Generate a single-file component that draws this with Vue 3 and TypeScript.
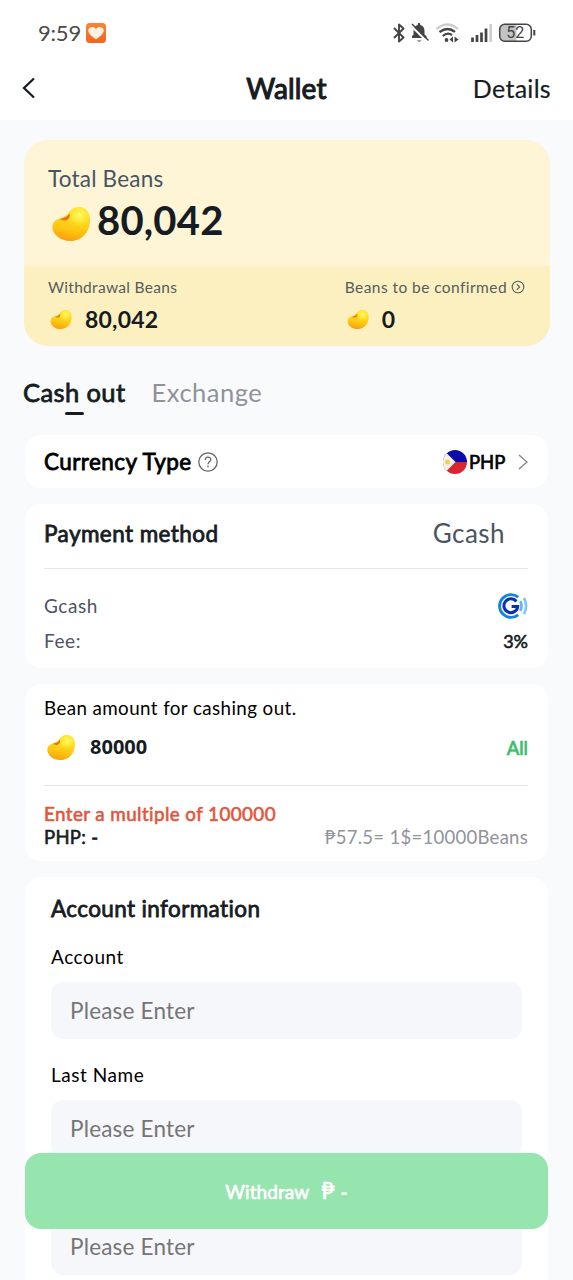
<script setup lang="ts">
import { defineComponent, h } from 'vue'

interface Field {
  id: string
  label: string
}

const fields: Field[] = [
  { id: 'account', label: 'Account' },
  { id: 'last-name', label: 'Last Name' },
  { id: 'extra', label: '' },
]

const BEAN =
  'M.6 18C1.600 14 4.500 12.200 8.500 11.200C12.500 10.200 14.500 8.300 16.500 5.800C19.300 2.300 22.500 0 27 0C34 0 38 6 38 13C38 25 30 34 18.500 34C7 34-1 26 .6 18Z'

const BeanIcon = defineComponent({
  setup() {
    return () =>
      h('svg', { viewBox: '0 0 38 34' }, [
        h('path', { d: BEAN, fill: 'url(#bean-body)' }),
        h('path', { d: BEAN, fill: 'url(#bean-shine)' }),
        h('path', {
          d: 'M7.500 12.300C11.500 11 15 10.200 17.500 6.500C18.500 9.500 17 13 13.500 13.500C11 13.900 10 12.800 7.500 12.300Z',
          fill: '#e5790f',
        }),
      ])
  },
})
</script>

<template>
  <div class="page">
    <svg class="defs" width="0" height="0">
      <defs>
        <linearGradient id="bean-body" x1="0.6" y1="0.1" x2="0.4" y2="1">
          <stop offset="0" stop-color="#ffdf3a" />
          <stop offset="0.6" stop-color="#fec910" />
          <stop offset="1" stop-color="#fb9e0c" />
        </linearGradient>
        <radialGradient id="bean-shine" cx="0.72" cy="0.25" r="0.36">
          <stop offset="0" stop-color="#fff678" />
          <stop offset="0.5" stop-color="#ffee30" stop-opacity="0.8" />
          <stop offset="1" stop-color="#ffd820" stop-opacity="0" />
        </radialGradient>
        <linearGradient id="app-bg" x1="0" y1="0" x2="0" y2="1">
          <stop offset="0" stop-color="#f5863a" />
          <stop offset="1" stop-color="#f3651c" />
        </linearGradient>
      </defs>
    </svg>

    <header class="top">
      <div class="status">
        <span class="clock">9:59</span>
        <svg class="app" viewBox="0 0 20 20">
          <rect width="20" height="20" rx="3.500" fill="url(#app-bg)" />
          <path d="M10 16.300C7 14.300 2.300 11 2.300 7.600C2.300 3.600 7.600 2.700 10 6C12.400 2.700 17.700 3.600 17.700 7.600C17.700 11 13 14.300 10 16.300Z" fill="#fff3e6" />
        </svg>
        <svg class="sys" viewBox="0 0 146 22">
          <path d="M3 6L12.500 15.500L8 19.500V2.500L12.500 6.500L3 16" fill="none" stroke="#444" stroke-width="1.900" stroke-linejoin="round" />
          <path d="M21 16V14L22.500 12.500V9C22.500 5.500 24 3.600 26.800 3V2C26.800 .8 29.200 .8 29.200 2V3C32 3.600 33.500 5.500 33.500 9V12.500L35.500 14V16Z" fill="#444" />
          <path d="M26 18.500H30.500Q28.200 20.800 26 18.500Z" fill="#444" />
          <path d="M19.800 3.500L36 19.500" stroke="#fff" stroke-width="2" />
          <path d="M21 2L37.500 18.500" stroke="#444" stroke-width="1.500" />
          <path d="M45.500 7Q56.500-2 67 7" fill="none" stroke="#ccc" stroke-width="2.300" />
          <path d="M48.500 10.200Q56.500 4 64 9.800M51.700 14Q56.500 9.800 61 13" fill="none" stroke="#444" stroke-width="2.300" />
          <circle cx="55.500" cy="18" r="1.900" fill="#444" />
          <path d="M62 14.500V20.500L58.500 17.500ZM63.500 14.500V20.500L67.500 17.500Z" fill="#444" />
          <path d="M81.500 20V15.500M86 20V13M90.500 20V10.500M95 20V6.500" stroke="#444" stroke-width="2.700" />
          <path d="M99.700 20V2" stroke="#ccc" stroke-width="2.500" />
          <path d="M114 2.500H125.500V19.500H114Q109 19.500 109 15V7Q109 2.500 114 2.500Z" fill="#c4c4c4" />
          <rect x="108.700" y="2.200" width="31.600" height="17" rx="5" fill="none" stroke="#444" stroke-width="1.500" />
          <path d="M143.300 8V13.500" stroke="#444" stroke-width="2" />
          <text x="124.300" y="16.200" text-anchor="middle" class="pct">52</text>
        </svg>
      </div>
      <nav class="bar">
        <svg class="back" viewBox="0 0 14 22"><path d="M12 1.500L2 11L12 20.500" /></svg>
        <h1>Wallet</h1>
        <a class="details">Details</a>
      </nav>
    </header>

    <section class="balance">
      <div class="total">
        <p class="total-label">Total Beans</p>
        <p class="total-value"><BeanIcon class="bean-lg" /><span>80,042</span></p>
      </div>
      <div class="split">
        <div class="part">
          <p class="part-label"><span class="wb">Withdrawal Beans</span></p>
          <p class="part-value"><BeanIcon class="bean-sm" /><span>80,042</span></p>
        </div>
        <div class="part">
          <p class="part-label">
            <span class="bc">Beans to be confirmed</span>
            <svg viewBox="0 0 14 14"><circle cx="7" cy="7" r="5.800" /><path d="M5.700 4.200L8.600 7L5.700 9.800" /></svg>
          </p>
          <p class="part-value"><BeanIcon class="bean-sm" /><span>0</span></p>
        </div>
      </div>
    </section>

    <div class="tabs">
      <span class="tab active">Cash out</span>
      <span class="tab">Exchange</span>
    </div>

    <section class="card currency">
      <h2>Currency Type</h2>
      <svg class="help" viewBox="0 0 20 20">
        <circle cx="10" cy="10" r="9.200" />
        <path d="M7.200 8C7.200 4.300 12.800 4.300 12.800 7.700C12.800 9.800 10 9.800 10 12.200M10 13.600V15.200" />
      </svg>
      <svg class="flag" viewBox="0 0 24 24">
        <clipPath id="flag-clip"><circle cx="12" cy="12" r="12" /></clipPath>
        <g clip-path="url(#flag-clip)">
          <rect width="24" height="12" fill="#0c0ca6" />
          <rect y="12" width="24" height="12" fill="#d9252f" />
          <path d="M0 0L2.500 2L12.500 12L2.500 22L0 24Z" fill="#f4f1ea" />
          <circle cx="4.600" cy="12" r="2.500" fill="#f6cf4a" />
        </g>
      </svg>
      <span class="code">PHP</span>
      <svg class="chev" viewBox="0 0 10 16"><path d="M1 1L9 8L1 15" /></svg>
    </section>

    <section class="card payment">
      <div class="pay-head">
        <h2>Payment method</h2>
        <span class="pay-name">Gcash</span>
      </div>
      <div class="row">
        <span class="muted">Gcash</span>
        <svg class="gcash" viewBox="0 0 30 26">
          <g fill="none">
            <path d="M20.200 4.200A11.400 11.400 0 1 0 20.200 21.800" stroke="#1583e0" stroke-width="2.900" />
            <path d="M18.300 8.500A6.900 6.900 0 1 0 19.700 13.500H13.600" stroke="#0b2fb4" stroke-width="3" />
            <path d="M22.300 8.200Q24.700 13 22.300 17.800" stroke="#62b5f0" stroke-width="2.700" />
            <path d="M26 5Q30.200 13 26 21" stroke="#83c6f4" stroke-width="2.700" />
          </g>
        </svg>
      </div>
      <div class="row">
        <span class="muted">Fee:</span>
        <span class="fee">3%</span>
      </div>
    </section>

    <section class="card amount">
      <p class="amount-label">Bean amount for cashing out.</p>
      <div class="amount-row">
        <BeanIcon class="bean-md" />
        <span class="amount-value">80000</span>
        <a class="all">All</a>
      </div>
      <p class="error">Enter a multiple of 100000</p>
      <div class="rate-row">
        <span class="php">PHP: -</span>
        <span class="rate">₱57.5= 1$=10000Beans</span>
      </div>
    </section>

    <section class="card account">
      <h2>Account information</h2>
      <div v-for="f in fields" :key="f.id" class="field">
        <label :for="f.id">{{ f.label }}</label>
        <input :id="f.id" type="text" placeholder="Please Enter" />
      </div>
    </section>

    <button class="withdraw"><span class="w">Withdraw</span><span class="peso">₱</span><span>-</span></button>
  </div>
</template>

<style>
body {
  margin: 0;
  background: #f8fafc;
}
</style>

<style scoped>
.page {
  position: relative;
  width: 573px;
  height: 1280px;
  overflow: hidden;
  background: #f8fafc;
  color: #161c22;
  font-family: Lato, "Liberation Sans", "Noto Sans", sans-serif;
  font-variant-ligatures: none;
  white-space: nowrap;
}
p, h1, h2 { margin: 0; }
svg { display: block; flex: none; }
.defs { position: absolute; }

.top { height: 120px; background: #fff; }
.status { display: flex; align-items: center; height: 66px; padding: 0 36px 0 38px; }
.clock { width: 48px; font-size: 22px; line-height: 26px; margin-top: -1px; color: #4a4a4a; letter-spacing: -0.2px; }
.app { width: 20px; height: 20px; }
.sys { width: 146px; height: 22px; margin-left: auto; }
.pct { font: 16px Roboto, sans-serif; fill: #444; }
.bar { display: grid; grid-template-columns: 1fr auto 1fr; align-items: center; height: 44px; padding: 0 22px; }
.back { width: 14px; height: 22px; }
.back path { fill: none; stroke: #161c22; stroke-width: 2.300; }
h1 { margin-top: -1px; font-size: 28px; font-weight: 400; line-height: 44px; letter-spacing: 0.200px; -webkit-text-stroke: 1.100px; }
.details { justify-self: end; margin-top: -1px; font-size: 25px; letter-spacing: 0.300px; -webkit-text-stroke: 0.200px; }

.balance { height: 206px; margin: 20px 23px 0 24px; border-radius: 24px; overflow: hidden; background: #fef5d7; }
.total { height: 126px; padding: 25px 24px 0; box-sizing: border-box; }
.total-label { font-size: 22.500px; line-height: 27px; color: #465563; letter-spacing: 0.200px; }
.total-value { display: flex; align-items: center; gap: 7px; height: 56px; padding-left: 4px; font-size: 40px; font-weight: 700; letter-spacing: 0.200px; }
.bean-lg { width: 38px; height: 34px; margin-top: 7px; }
.split { display: flex; justify-content: space-between; height: 80px; padding: 10px 25px 0 24px; box-sizing: border-box; background: #fdf0c0; }
.part-label { display: flex; align-items: center; gap: 4px; height: 22px; font-size: 15.500px; color: #555c5d; }
.wb { letter-spacing: 0.300px; }
.bc { letter-spacing: 0.430px; }
.part-label svg { width: 14px; height: 14px; fill: none; stroke: #555c5d; stroke-width: 1.100; }
.part-value { display: flex; align-items: center; gap: 13px; height: 42px; padding-left: 2px; font-size: 23px; font-weight: 700; letter-spacing: 0.200px; }
.bean-sm { width: 22px; height: 19px; }

.tabs { display: flex; gap: 26px; height: 89px; padding: 29px 23px 0; box-sizing: border-box; font-size: 25.500px; line-height: 35px; letter-spacing: 0.500px; }
.tab { position: relative; height: 34px; color: #90939a; }
.active { color: #161c22; letter-spacing: 0.400px; -webkit-text-stroke: 0.800px; }
.active::after { content: ""; position: absolute; left: 50%; bottom: -6px; width: 19px; height: 3px; margin-left: -9.500px; border-radius: 2px; background: #161c22; }

.card { margin: 0 25px 16px; border-radius: 16px; background: #fff; box-sizing: border-box; }
h2 { font-size: 22.500px; font-weight: 400; letter-spacing: 0.420px; -webkit-text-stroke: 0.800px; }
.currency { display: flex; align-items: center; height: 53px; padding: 0 20px 0 19px; color: #000; }
.help { width: 20px; height: 20px; margin-left: 6px; fill: none; stroke: #666; stroke-width: 1.300; }
.flag { width: 24px; height: 24px; margin-left: auto; }
.code { width: 36px; margin: 0 13px 0 2px; font-size: 18.500px; -webkit-text-stroke: 0.700px; }
.chev { width: 10px; height: 16px; fill: none; stroke: #888; stroke-width: 1.500; }

.payment { height: 164px; padding: 0 20px 0 19px; }
.pay-head { display: flex; justify-content: space-between; align-items: center; height: 65px; padding: 0 23px 6px 0; box-sizing: border-box; border-bottom: 1px solid #e5e7e9; margin-bottom: 19px; }
.pay-name { font-size: 26px; color: #4b5563; letter-spacing: 0.450px; }
.row { display: flex; justify-content: space-between; align-items: center; height: 35px; }
.muted { font-size: 19px; color: #4b5563; letter-spacing: 0.550px; }
.gcash { width: 30px; height: 26px; }
.fee { font-size: 18px; -webkit-text-stroke: 0.600px; }

.amount { height: 177px; padding: 11px 20px 0 19px; }
.amount-label { font-size: 18.800px; line-height: 25px; color: #000; letter-spacing: 0.400px; }
.amount-row { display: flex; align-items: center; height: 66px; padding: 0 0 10px 3px; box-sizing: border-box; border-bottom: 1px solid #e5e7e9; }
.bean-md { width: 28px; height: 25px; }
.amount-value { margin: -2px 0 0 15px; font: 700 20px "Noto Sans", sans-serif; }
.all { margin-left: auto; font-size: 18.500px; color: #37bd6b; -webkit-text-stroke: 0.700px; }
.error { padding-top: 16px; font-size: 18.800px; line-height: 24px; color: #e0573c; letter-spacing: 0.420px; -webkit-text-stroke: 0.600px; }
.rate-row { display: flex; justify-content: space-between; font-size: 18.500px; line-height: 23px; }
.php { letter-spacing: 0.300px; -webkit-text-stroke: 0.600px; }
.rate { color: #90939a; letter-spacing: 0.280px; }

.account { height: 420px; padding: 19px 26px 0; }
.account h2 { line-height: 26px; margin-bottom: 20px; letter-spacing: 0.380px; }
.field { display: flex; flex-direction: column; height: 118px; }
label { height: 40px; font-size: 19px; line-height: 29px; color: #000; letter-spacing: 0.550px; }
input { flex: none; height: 57px; margin: 0; padding: 0 19px 1px; box-sizing: border-box; border: 0; border-radius: 12px; background: #f6f7fb; font: 22.500px Lato, sans-serif; letter-spacing: 0.200px; }
input::placeholder { color: #757575; opacity: 1; }

.withdraw { position: absolute; left: 25px; top: 1153px; display: flex; align-items: center; justify-content: center; gap: 6px; width: 523px; height: 76px; padding: 0; border: 0; border-radius: 16px; background: #96e4ae; color: #fff; font: 19px Lato, "Noto Sans", sans-serif; -webkit-text-stroke: 0.700px; letter-spacing: 0.100px; }
.w { margin-right: 6px; }
.peso { margin-top: -2px; font-size: 22.500px; }
</style>
